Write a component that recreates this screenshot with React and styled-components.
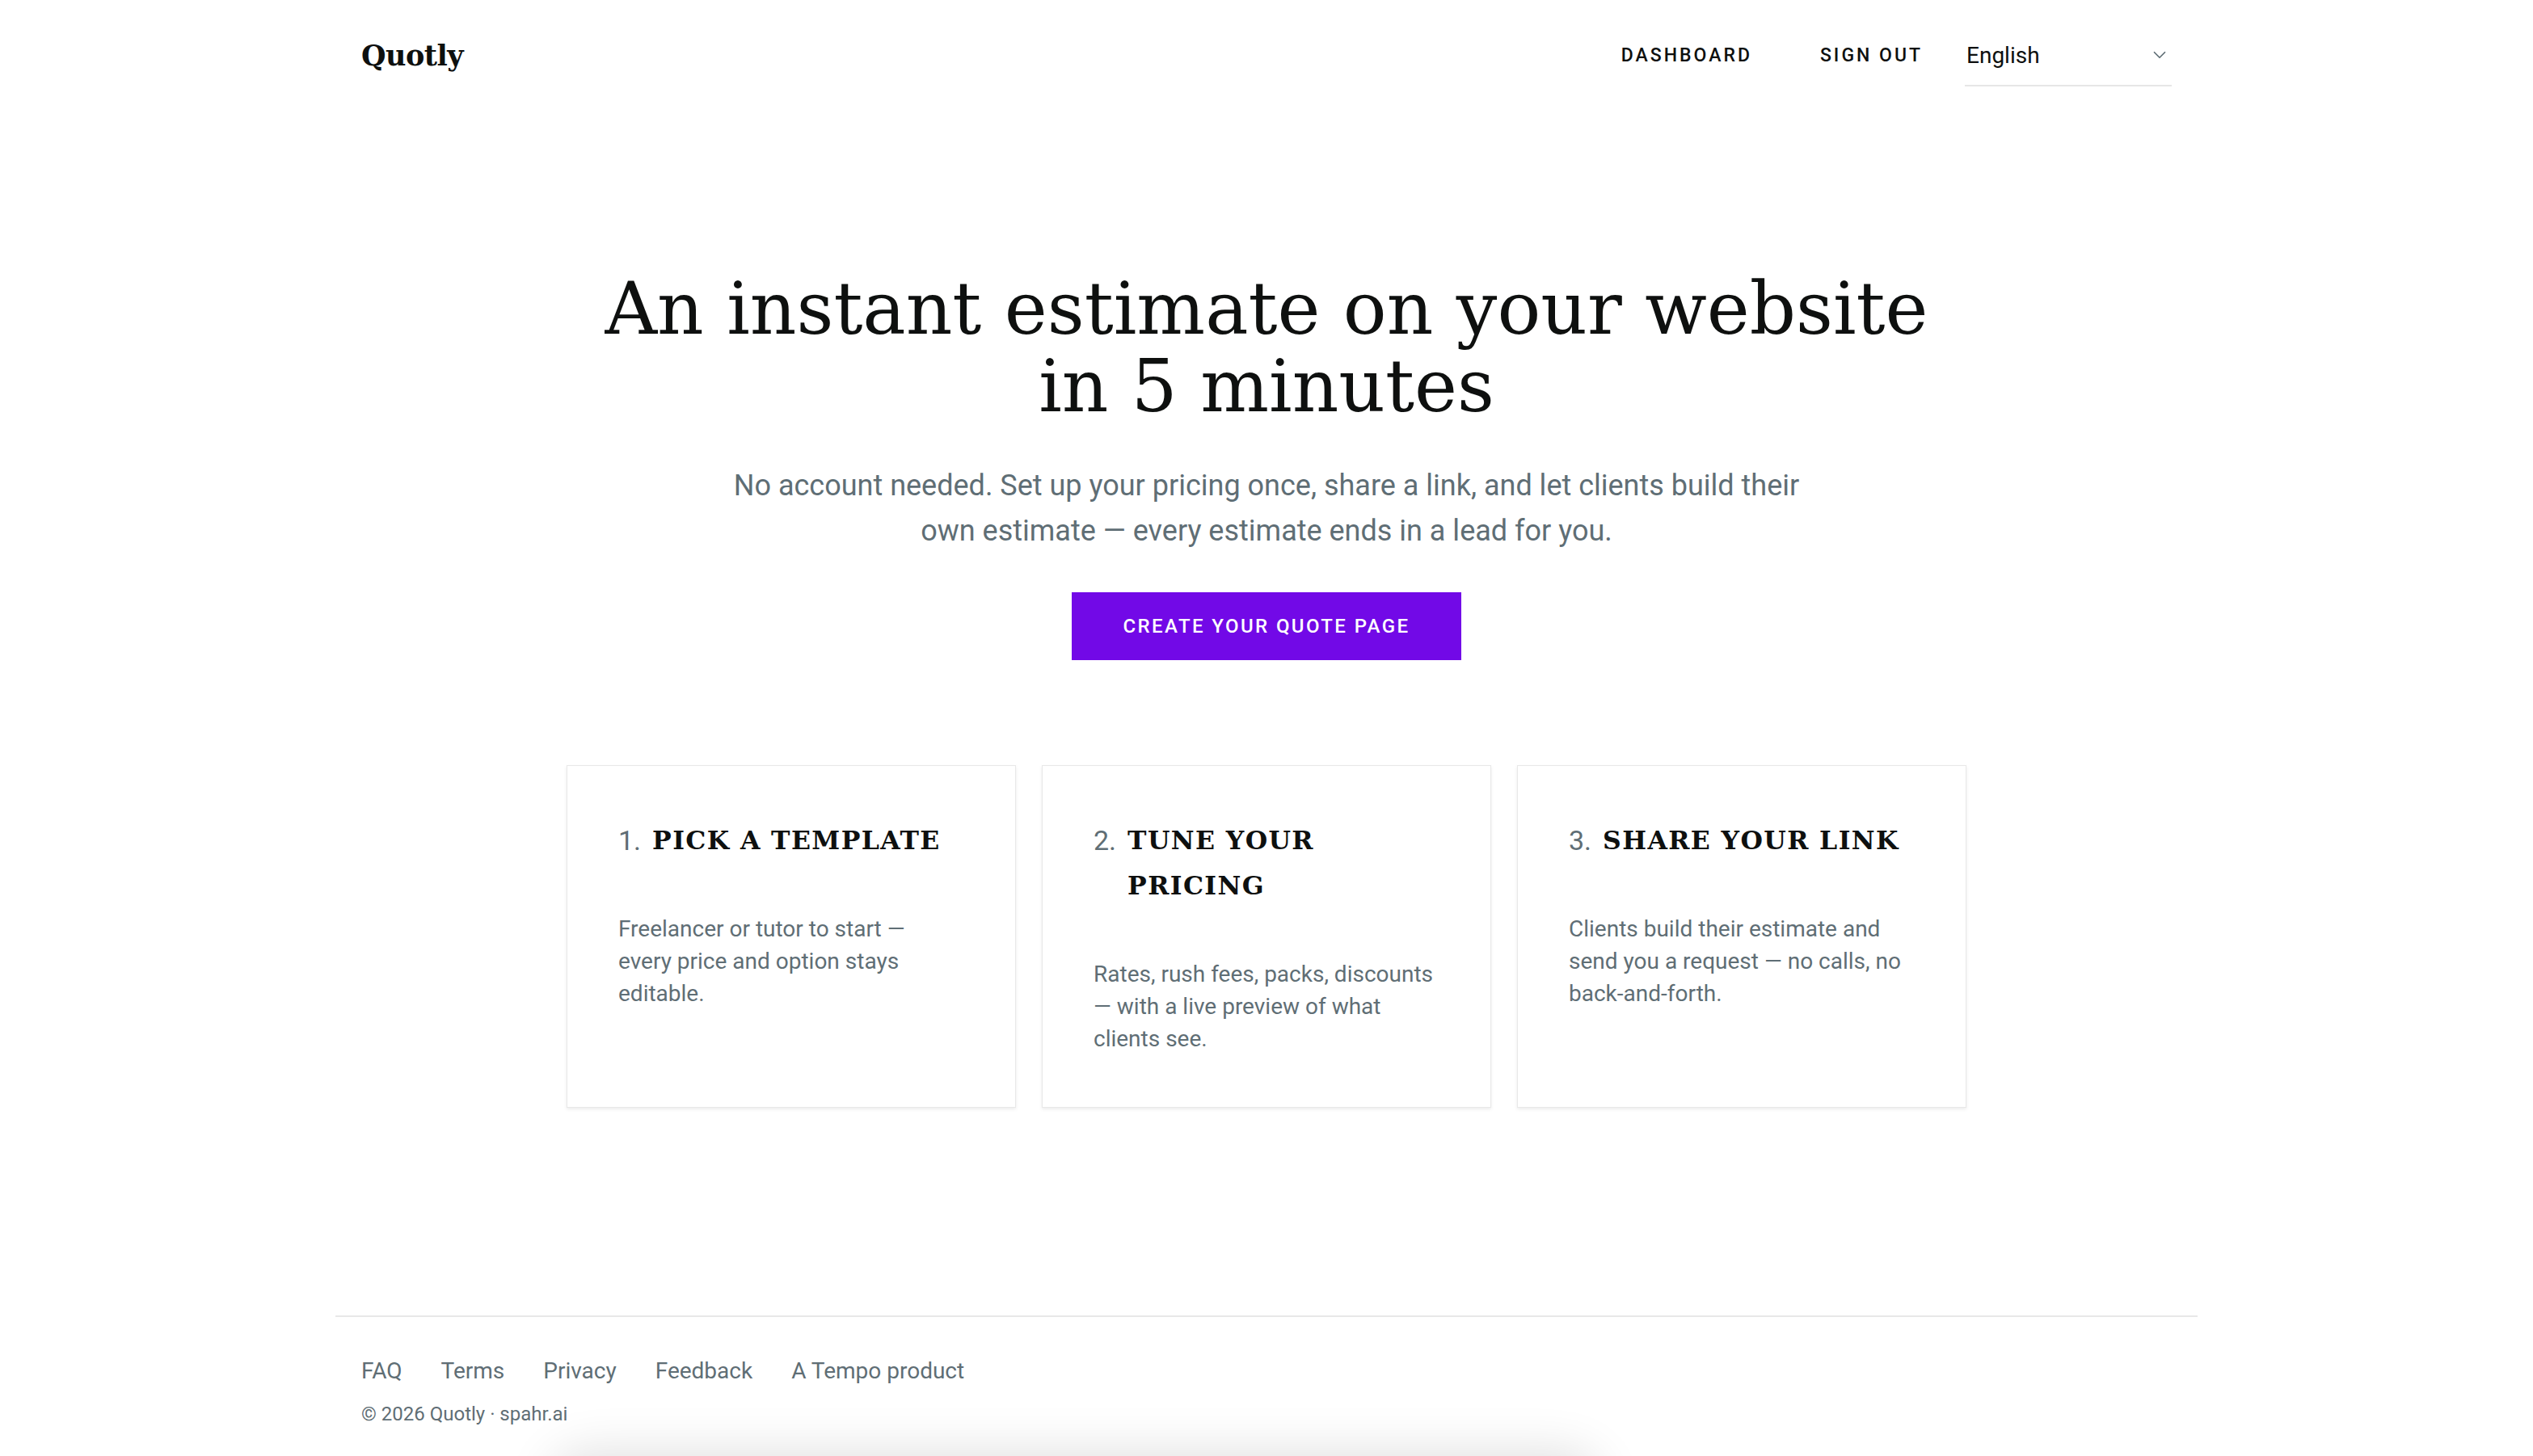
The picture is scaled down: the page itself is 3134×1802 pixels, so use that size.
import React from "react";
import styled, { createGlobalStyle } from "styled-components";

const GlobalStyle = createGlobalStyle`
  html, body {
    margin: 0;
    padding: 0;
    background: #ffffff;
  }
  body {
    font-family: Roboto, "Liberation Sans", sans-serif;
    color: #0e100f;
    -webkit-font-smoothing: antialiased;
  }
  * {
    box-sizing: border-box;
  }
`;

const SERIF = `"DejaVu Serif", "Liberation Serif", serif`;
const MUTED = "#5f6e75";

const Page = styled.div`
  min-height: 1802px;
  display: flex;
  flex-direction: column;
`;

const Container = styled.div`
  width: 100%;
  max-width: 2304px;
  margin: 0 auto;
  padding: 0 32px;
`;

const Header = styled.header`
  height: 136px;
  display: flex;
  align-items: center;
  justify-content: space-between;
`;

const Logo = styled.a`
  font-family: ${SERIF};
  font-weight: 700;
  font-size: 35px;
  letter-spacing: -0.5px;
  color: #0e100f;
  text-decoration: none;
`;

const Nav = styled.nav`
  display: flex;
  align-items: center;
`;

const NavLink = styled.a`
  padding: 0 42px;
  font-size: 23px;
  font-weight: 500;
  letter-spacing: 3px;
  text-transform: uppercase;
  color: #0e100f;
  text-decoration: none;
`;

const LangSelect = styled.div`
  margin-left: 10px;
  width: 256px;
  height: 76px;
  display: flex;
  align-items: center;
  justify-content: space-between;
  padding: 0 2px 0 2px;
  border-bottom: 2px solid #e6e6e6;
  font-size: 28px;
  color: #0e100f;
  margin-top: 2px;
`;

const Hero = styled.section`
  display: flex;
  flex-direction: column;
  align-items: center;
  text-align: center;
  padding-top: 198px;
`;

const Title = styled.h1`
  margin: 0;
  max-width: 1680px;
  font-family: ${SERIF};
  font-weight: 400;
  font-size: 89.5px;
  line-height: 96px;
  color: #0e100f;
`;

const Lead = styled.p`
  margin: 47px 0 0;
  max-width: 1360px;
  font-size: 36px;
  line-height: 56px;
  color: ${MUTED};
`;

const PrimaryButton = styled.a`
  margin-top: 48px;
  display: inline-flex;
  align-items: center;
  justify-content: center;
  height: 84px;
  padding: 0 64px;
  background: #7209e7;
  color: #ffffff;
  font-size: 24px;
  font-weight: 500;
  letter-spacing: 2.4px;
  text-transform: uppercase;
  text-decoration: none;
`;

const Steps = styled.div`
  margin: 130px auto 0;
  width: 1732px;
  display: grid;
  grid-template-columns: repeat(3, 1fr);
  gap: 32px;
`;

const StepCard = styled.div`
  background: #ffffff;
  border: 1px solid #e8e8e8;
  box-shadow: 0 2px 4px rgba(0, 0, 0, 0.08);
  padding: 64px 68px 64px 63px;
`;

const StepHeading = styled.h3`
  margin: 0;
  display: flex;
  gap: 14px;
  line-height: 56px;
`;

const StepNumber = styled.span`
  font-family: Roboto, sans-serif;
  font-weight: 400;
  font-size: 34px;
  color: ${MUTED};
  flex-shrink: 0;
`;

const StepName = styled.span`
  font-family: ${SERIF};
  font-weight: 700;
  font-size: 31.5px;
  letter-spacing: 1.4px;
  text-transform: uppercase;
  color: #0e100f;
`;

const StepText = styled.p`
  margin: 62px 0 0;
  font-size: 28px;
  line-height: 40px;
  color: ${MUTED};
`;

const Footer = styled.footer`
  margin: auto auto 0;
  width: 100%;
  max-width: 2304px;
  border-top: 2px solid #e8e8e8;
  padding: 46px 32px 36px;
`;

const FooterLinks = styled.div`
  display: flex;
  gap: 48px;
  height: 40px;
  align-items: center;
`;

const FooterLink = styled.a`
  font-size: 28px;
  color: ${MUTED};
  text-decoration: none;
`;

const Copyright = styled.div`
  margin-top: 18px;
  font-size: 24px;
  line-height: 32px;
  color: ${MUTED};
`;

const Main = styled.main`
  padding-bottom: 256px;
`;

const ToastShadow = styled.div`
  position: fixed;
  left: 680px;
  width: 1300px;
  bottom: -90px;
  height: 90px;
  border-radius: 50px;
  box-shadow: 0 -6px 60px rgba(0, 0, 0, 0.12);
  pointer-events: none;
`;

const Chevron = () => (
  <svg width="26" height="26" viewBox="0 0 24 24" fill="none" stroke={MUTED} strokeWidth="1.6" strokeLinecap="round" strokeLinejoin="round">
    <polyline points="6 9 12 15 18 9" />
  </svg>
);

const steps = [
  {
    title: "Pick a template",
    text: "Freelancer or tutor to start — every price and option stays editable.",
  },
  {
    title: "Tune your pricing",
    text: "Rates, rush fees, packs, discounts — with a live preview of what clients see.",
  },
  {
    title: "Share your link",
    text: "Clients build their estimate and send you a request — no calls, no back-and-forth.",
  },
];

const App = () => (
  <Page>
    <GlobalStyle />
    <Container>
      <Header>
        <Logo href="#">Quotly</Logo>
        <Nav>
          <NavLink href="#">Dashboard</NavLink>
          <NavLink href="#">Sign out</NavLink>
          <LangSelect>
            <span>English</span>
            <Chevron />
          </LangSelect>
        </Nav>
      </Header>
    </Container>

    <Main>
      <Hero>
        <Title>An instant estimate on your website in 5 minutes</Title>
        <Lead>
          No account needed. Set up your pricing once, share a link, and let clients build their own
          estimate — every estimate ends in a lead for you.
        </Lead>
        <PrimaryButton href="#">Create your quote page</PrimaryButton>
      </Hero>

      <Steps>
        {steps.map((step, i) => (
          <StepCard key={step.title}>
            <StepHeading>
              <StepNumber>{i + 1}.</StepNumber>
              <StepName>{step.title}</StepName>
            </StepHeading>
            <StepText>{step.text}</StepText>
          </StepCard>
        ))}
      </Steps>
    </Main>

    <Footer>
      <FooterLinks>
        <FooterLink href="#">FAQ</FooterLink>
        <FooterLink href="#">Terms</FooterLink>
        <FooterLink href="#">Privacy</FooterLink>
        <FooterLink href="#">Feedback</FooterLink>
        <FooterLink href="#">A Tempo product</FooterLink>
      </FooterLinks>
      <Copyright>© 2026 Quotly · spahr.ai</Copyright>
    </Footer>
    <ToastShadow />
  </Page>
);

export default App;
